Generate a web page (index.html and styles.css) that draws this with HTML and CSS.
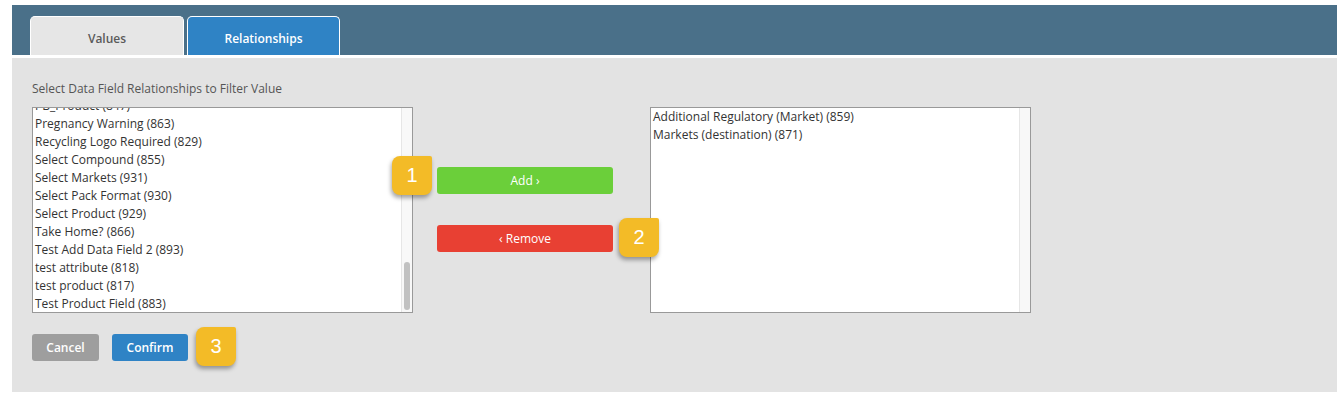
FILE: index.html
```html
<!DOCTYPE html>
<html lang="en">
<head>
    <meta charset="UTF-8">
    <title>Data Field Relationships</title>
    <link rel="stylesheet" href="styles.css">
</head>
<body>
    <!-- Tab bar -->
    <div class="tabbar">
        <div class="tab">Values</div>
        <div class="tab active">Relationships</div>
    </div>

    <div class="panel">
        <p class="label">Select Data Field Relationships to Filter Value</p>

        <div class="picker">
            <!-- Available fields -->
            <div class="listbox">
                <ul class="items scrolled">
                    <li>PB_Product (847)</li>
                    <li>Pregnancy Warning (863)</li>
                    <li>Recycling Logo Required (829)</li>
                    <li>Select Compound (855)</li>
                    <li>Select Markets (931)</li>
                    <li>Select Pack Format (930)</li>
                    <li>Select Product (929)</li>
                    <li>Take Home? (866)</li>
                    <li>Test Add Data Field 2 (893)</li>
                    <li>test attribute (818)</li>
                    <li>test product (817)</li>
                    <li>Test Product Field (883)</li>
                </ul>
                <div class="track"><div class="thumb"></div></div>
            </div>

            <div class="actions">
                <div class="btn-wrap">
                    <span class="badge badge-left">1</span>
                    <button class="button add">Add &rsaquo;</button>
                </div>
                <div class="btn-wrap">
                    <button class="button remove">&lsaquo; Remove</button>
                    <span class="badge badge-right">2</span>
                </div>
            </div>

            <!-- Selected fields -->
            <div class="listbox">
                <ul class="items">
                    <li>Additional Regulatory (Market) (859)</li>
                    <li>Markets (destination) (871)</li>
                </ul>
                <div class="track"></div>
            </div>
        </div>

        <div class="footer">
            <button class="button cancel">Cancel</button>
            <div class="btn-wrap">
                <button class="button confirm">Confirm</button>
                <span class="badge badge-right badge-low">3</span>
            </div>
        </div>
    </div>
</body>
</html>
```

FILE: styles.css
```css
body {
    margin: 0;
    padding: 5px 6px 7px 12px;
    background-color: #fff;
    font-family: "Open Sans", "Liberation Sans", Arial, sans-serif;
    font-size: 12px;
    color: #333;
}
.tabbar {
    display: flex;
    align-items: flex-end;
    gap: 3px;
    height: 50px;
    padding-left: 18px;
    background-color: #4a7089;
}
.tab {
    box-sizing: border-box;
    width: 154px;
    height: 39px;
    padding-top: 13px;
    text-align: center;
    font-weight: 600;
    color: #5a5a5a;
    background-color: #e6e6e6;
    border: 1px solid #fff;
    border-bottom: none;
    border-radius: 5px 5px 0 0;
}
.tab.active {
    width: 153px;
    color: #fff;
    background-color: #2f83c5;
}
.panel {
    margin-top: 3px;
    height: 334px;
    box-sizing: border-box;
    padding: 22px 20px 0 20px;
    background-color: #e3e3e3;
}
.label {
    margin: 0 0 10px 0;
    line-height: 17px;
    color: #555;
}
.picker {
    display: flex;
    align-items: flex-start;
}
.listbox {
    display: flex;
    box-sizing: border-box;
    width: 381px;
    height: 206px;
    background-color: #fff;
    border: 1px solid #999;
    overflow: hidden;
}
.items {
    flex: 1;
    list-style: none;
    margin: 0;
    padding: 0 0 0 2px;
}
.items li {
    line-height: 18px;
    font-size: 12px;
    white-space: nowrap;
}
.items.scrolled {
    margin-top: -11px;
}
.track {
    display: flex;
    flex-direction: column;
    justify-content: flex-end;
    width: 10px;
    padding: 2px 0;
    background-color: #f8f8f8;
    border-left: 1px solid #e6e6e6;
}
.thumb {
    height: 48px;
    margin: 0 2px;
    border-radius: 4px;
    background-color: #c1c1c1;
}
.actions {
    display: flex;
    flex-direction: column;
    gap: 31px;
    padding-top: 60px;
    margin: 0 37px 0 24px;
}
.btn-wrap {
    position: relative;
}
.button {
    display: block;
    height: 27px;
    border: none;
    border-radius: 3px;
    color: #fff;
    font-family: inherit;
    font-size: 12px;
    font-weight: 600;
    cursor: pointer;
}
.add {
    width: 176px;
    font-weight: 400;
    background-color: #6bcf3a;
}
.remove {
    width: 176px;
    font-weight: 400;
    background-color: #e84033;
}
.footer {
    display: flex;
    gap: 13px;
    margin-top: 21px;
}
.cancel {
    width: 67px;
    background-color: #9e9e9e;
}
.confirm {
    width: 76px;
    background-color: #2f83c5;
}
.badge {
    position: absolute;
    width: 40px;
    height: 39px;
    line-height: 39px;
    text-align: center;
    font-family: "Liberation Sans", Arial, sans-serif;
    font-size: 20px;
    color: #fff;
    background-color: #f3bb27;
    border-radius: 8px 2px 8px 8px;
    box-shadow: -1px 3px 4px rgba(0, 0, 0, 0.35);
}
.badge-left {
    left: -45px;
    top: -11px;
}
.badge-right {
    left: 182px;
    top: -7px;
}
.badge-low {
    left: 84px;
}
```
